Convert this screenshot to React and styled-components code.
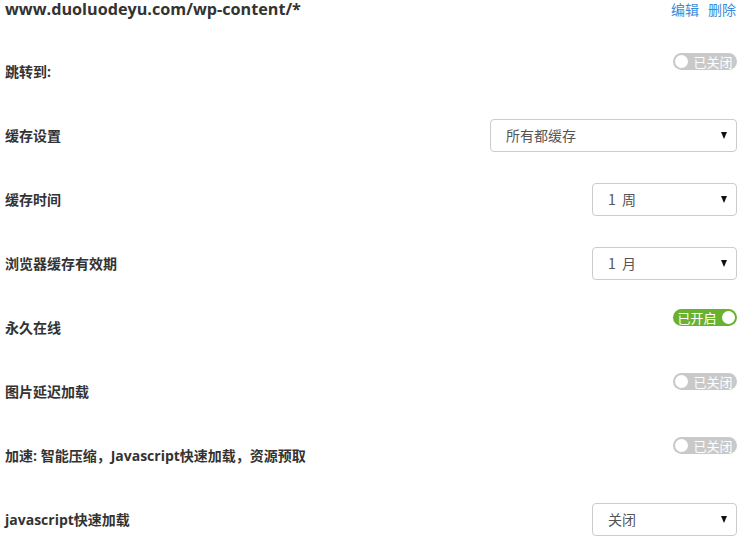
import React from "react";
import styled, { createGlobalStyle } from "styled-components";

const Global = createGlobalStyle`
  html, body { margin: 0; padding: 0; background: #fff; }
  body { font-family: "Open Sans", "Noto Sans CJK SC", sans-serif; color: #333; }
`;

const Page = styled.div`
  width: 746px;
  padding: 0 9px 0 5px;
  box-sizing: border-box;
`;

const Header = styled.div`
  height: 39px;
  display: flex;
  justify-content: space-between;
  align-items: flex-start;
`;

const Title = styled.div`
  font-size: 16.2px;
  font-weight: 700;
  line-height: 19px;
  color: #333;
`;

const Links = styled.div`
  display: flex;
  gap: 9px;
  font-size: 14px;
  line-height: 18px;
  margin-right: 1px;
`;

const Link = styled.a`
  color: #3a8ad8;
  text-decoration: none;
  font-family: "Noto Sans CJK SC", sans-serif;
`;

const Row = styled.div`
  height: 64px;
  display: flex;
  align-items: center;
  justify-content: space-between;
`;

const Label = styled.div`
  font-size: 14px;
  font-weight: 700;
  color: #333;
  font-family: "Open Sans", "Noto Sans CJK SC", sans-serif;
`;

const Toggle = styled.div`
  width: 64px;
  height: 17px;
  border-radius: 9px;
  margin-bottom: 20px;
  background: ${(p) => (p.$on ? "#69b230" : "#c9c9c9")};
  display: flex;
  flex-direction: ${(p) => (p.$on ? "row-reverse" : "row")};
  align-items: center;
  padding: 0 2px;
  box-sizing: border-box;
  gap: 3px;
`;

const Knob = styled.span`
  width: 13px;
  height: 13px;
  border-radius: 50%;
  background: #fff;
  flex: none;
`;

const ToggleText = styled.span`
  flex: 1;
  text-align: center;
  font-size: 13px;
  color: #fff;
  font-family: "Noto Sans CJK SC", sans-serif;
  line-height: 17px;
`;

const Select = styled.div`
  width: ${(p) => p.$w}px;
  height: 33px;
  box-sizing: border-box;
  border: 1px solid #cccccc;
  border-radius: 4px;
  display: flex;
  align-items: center;
  justify-content: space-between;
  padding: 0 9px 0 15px;
  font-size: 14px;
  color: #555;
  font-family: "Noto Sans CJK SC", sans-serif;
  word-spacing: 3px;
`;

const Arrow = styled.span`
  width: 0;
  height: 0;
  border-left: 3.5px solid transparent;
  border-right: 3.5px solid transparent;
  border-top: 7px solid #111;
`;

const rows = [
  { label: "跳转到:", type: "toggle", on: false },
  { label: "缓存设置", type: "select", value: "所有都缓存", w: 247 },
  { label: "缓存时间", type: "select", value: "1 周", w: 145 },
  { label: "浏览器缓存有效期", type: "select", value: "1 月", w: 145 },
  { label: "永久在线", type: "toggle", on: true },
  { label: "图片延迟加载", type: "toggle", on: false },
  { label: "加速: 智能压缩，Javascript快速加载，资源预取", type: "toggle", on: false },
  { label: "javascript快速加载", type: "select", value: "关闭", w: 145 },
];

export default function App() {
  return (
    <Page>
      <Global />
      <Header>
        <Title>www.duoluodeyu.com/wp-content/*</Title>
        <Links>
          <Link href="#">编辑</Link>
          <Link href="#">删除</Link>
        </Links>
      </Header>
      {rows.map((r, i) => (
        <Row key={i}>
          <Label>{r.label}</Label>
          {r.type === "toggle" ? (
            <Toggle $on={r.on}>
              <Knob />
              <ToggleText>{r.on ? "已开启" : "已关闭"}</ToggleText>
            </Toggle>
          ) : (
            <Select $w={r.w}>
              <span>{r.value}</span>
              <Arrow />
            </Select>
          )}
        </Row>
      ))}
    </Page>
  );
}
